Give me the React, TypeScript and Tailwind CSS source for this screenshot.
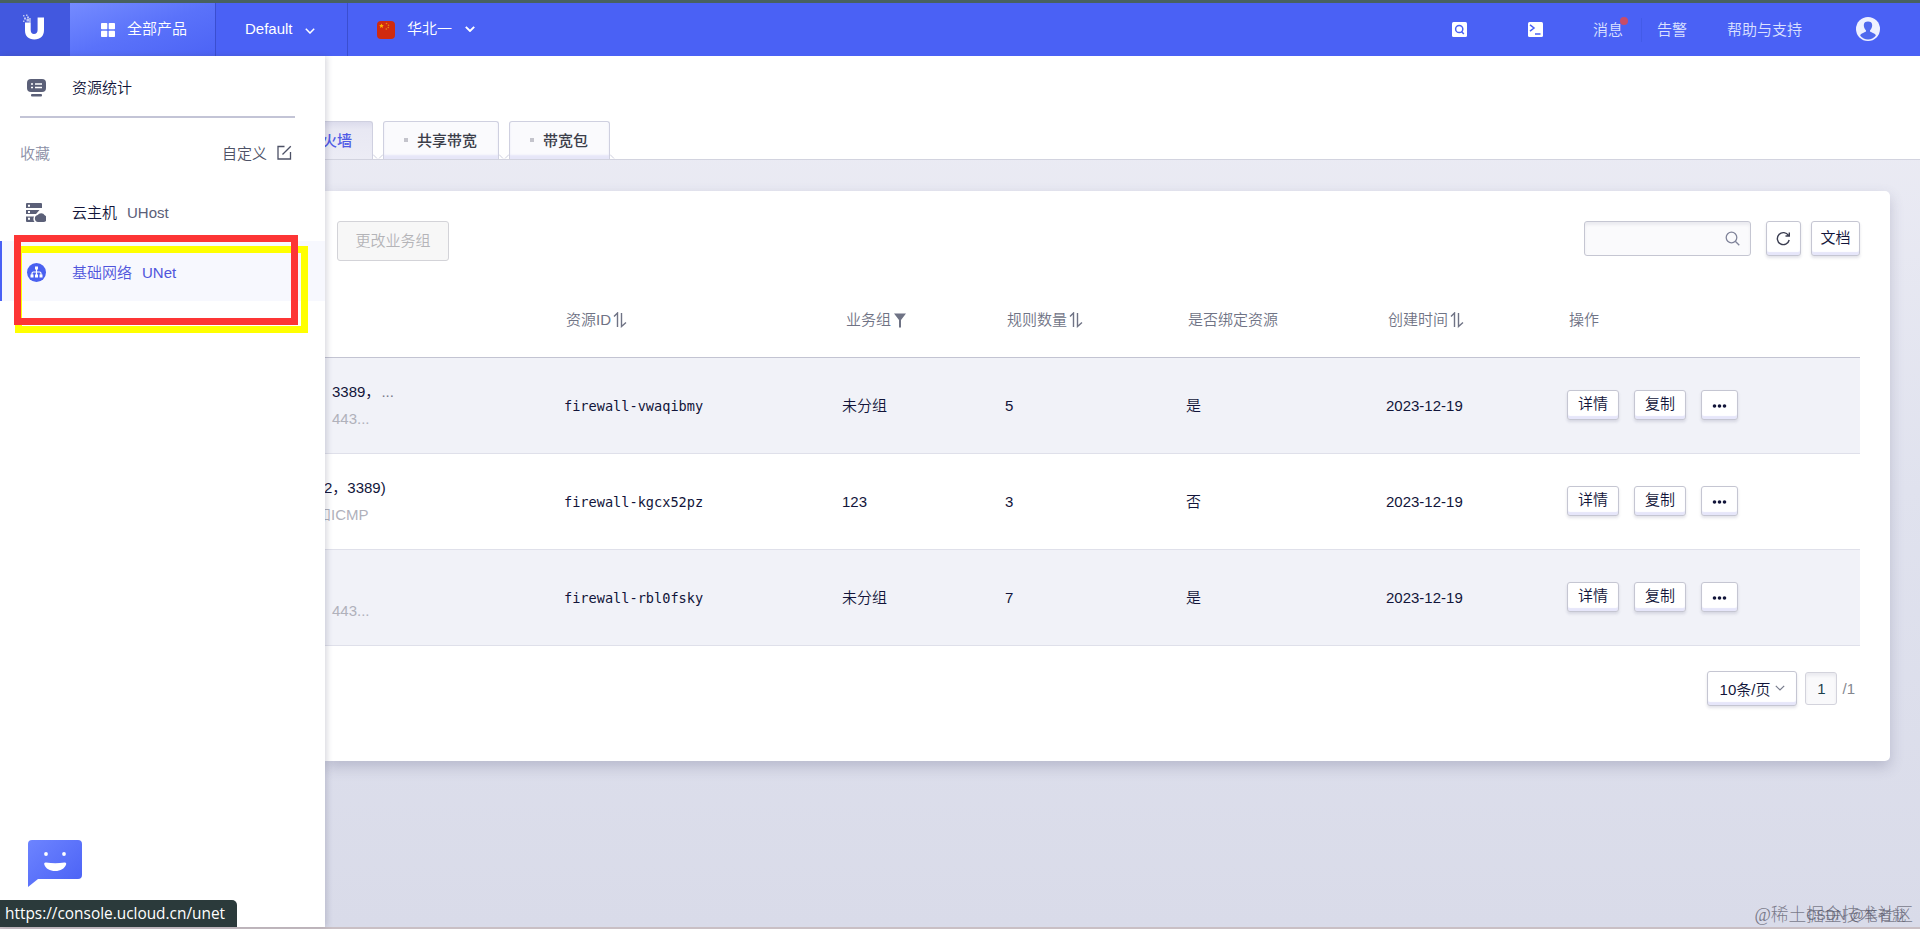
import React, { ReactNode } from "react";

const buttonClassName =
  "flex shrink-0 items-center justify-center rounded-[3px] border border-[#c5c6d2] bg-white text-[#12153a] shadow-[inset_0_-3px_1px_#e6e6fa,0_2px_3px_rgba(60,60,100,0.14)]";

interface FirewallRow {
  name: ReactNode;
  detail: string;
  id: string;
  group: string;
  rules: number;
  bound: string;
  created: string;
  detailClassName?: string;
  nameClassName?: string;
}

const rows: FirewallRow[] = [
  {
    name: (
      <>
        3389，<span className="ml-px text-[#777b8c]">...</span>
      </>
    ),
    detail: "443...",
    id: "firewall-vwaqibmy",
    group: "未分组",
    rules: 5,
    bound: "是",
    created: "2023-12-19",
  },
  {
    name: "2，3389)",
    nameClassName: "-ml-2",
    detail: "和ICMP",
    detailClassName: "-ml-4",
    id: "firewall-kgcx52pz",
    group: "123",
    rules: 3,
    bound: "否",
    created: "2023-12-19",
  },
  {
    name: "",
    detail: "443...",
    id: "firewall-rbl0fsky",
    group: "未分组",
    rules: 7,
    bound: "是",
    created: "2023-12-19",
  },
];

const gridClassName =
  "grid grid-cols-[239px_278px_162px_182px_199px_182px_1fr]";

const Logo: React.FC = () => (
  <svg className="mr-0.5 h-7 w-6" viewBox="0 0 24 28">
    <path
      d="M3 9.500h5.700V17c0 2.600 1.200 4 3.300 4s3.600-1.400 3.600-4V4.500H22V17c0 6-3.600 9.500-9.600 9.500C6.300 26.500 3 23 3 17.500z"
      fill="#fff"
    />
    <g fill="#fff" opacity=".65">
      <rect x="1" y="2" width="1.500" height="1.500" />
      <rect x="4" y="1.500" width="1.500" height="1.500" />
      <rect x="2" y="4.500" width="2" height="2" />
      <rect x="5" y="3.500" width="2" height="2" />
      <rect x="4.500" y="6" width="2.500" height="2.500" />
      <rect x="7.200" y="5" width="1.500" height="4.500" />
      <rect x="1" y="7.500" width="1.500" height="1.500" />
    </g>
  </svg>
);

const Chevron: React.FC<{ className?: string; width?: number }> = ({
  className = "",
  width = 1.5,
}) => (
  <svg className={className} viewBox="0 0 10 6" fill="none">
    <path d="M.8.8 5 5 9.200.8" stroke="currentColor" strokeWidth={width} />
  </svg>
);

const SortIcon: React.FC = () => (
  <svg className="ml-0.5 h-4 w-3.5" viewBox="0 0 14 16" fill="none">
    <path
      d="M1 4.500 4.500 1v14M8.500 1v13.500L13 10.500"
      stroke="currentColor"
      strokeWidth="1.400"
    />
  </svg>
);

const TopBar: React.FC = () => (
  <header className="flex h-14 shrink-0 border-t-[3px] border-[#48615f] bg-[#4a61f5] text-white">
    <div className="flex w-[70px] justify-center bg-[#4258df] pt-2.5">
      <Logo />
    </div>
    <div className="flex w-[146px] items-center border-r border-[#3a4ed0] bg-gradient-to-br from-[#758bff] via-[#5a72fa] to-[#4c63f5] pb-0.5 pl-[31px]">
      <svg
        className="mt-0.5 mr-3 h-3.5 w-3.5"
        viewBox="0 0 14 14"
        fill="currentColor"
      >
        <rect width="6.300" height="6.300" rx=".8" />
        <rect x="7.700" width="6.300" height="6.300" rx=".8" />
        <rect y="7.700" width="6.300" height="6.300" rx=".8" />
        <rect x="7.700" y="7.700" width="6.300" height="6.300" rx=".8" />
      </svg>
      全部产品
    </div>
    <div className="flex w-[132px] items-center border-r border-[#3a4ed0] pb-0.5 pl-[29px]">
      Default
      <Chevron className="mt-1 ml-3 h-1.5 w-2.5" />
    </div>
    <div className="flex items-center pb-0.5 pl-[29px]">
      <svg className="mt-0.5 mr-3 h-[18px] w-[18px]" viewBox="0 0 18 18">
        <rect width="18" height="18" rx="4" fill="#d02a10" />
        <path
          d="m4.500 2.500.7 1.500 1.600.2-1.200 1.100.3 1.600-1.400-.8-1.400.8.3-1.600L2.200 4.200l1.600-.2z"
          fill="#ffb400"
        />
        <g fill="#e88a10">
          <circle cx="9.500" cy="2.500" r=".8" />
          <circle cx="11.500" cy="4.200" r=".8" />
          <circle cx="11.300" cy="6.500" r=".8" />
          <circle cx="9.300" cy="8" r=".8" />
        </g>
      </svg>
      华北一
      <Chevron className="ml-[13px] h-1.5 w-2.5" width={1.9} />
    </div>
    <div className="ml-auto flex items-center pr-10 text-[#dce1ff]">
      <svg className="mr-[61px] h-[15px] w-[15px]" viewBox="0 0 15 15">
        <rect width="15" height="15" rx="1.500" fill="#fff" />
        <g fill="none" stroke="#4a61f5" strokeWidth="1.500">
          <circle cx="7.200" cy="7" r="3.600" />
          <path d="m9.500 9.500 2.300 2.500" />
        </g>
      </svg>
      <svg className="mr-[50px] h-[15px] w-[15px]" viewBox="0 0 15 15">
        <rect width="15" height="15" rx="1.500" fill="#fff" />
        <path
          d="m2 2.800 4 3.200-4 3.200M7 12h5.500"
          fill="none"
          stroke="#4a61f5"
          strokeWidth="1.500"
        />
      </svg>
      <span className="relative mr-[18px]">
        消息
        <i className="absolute -top-px -right-[5px] h-2 w-2 rounded-full bg-[#c94c69]" />
      </span>
      <span className="mr-[15px] h-6 w-px bg-[#435be8]" />
      <span className="mr-10">告警</span>
      <span className="mr-[54px]">帮助与支持</span>
      <svg className="-mt-0.5 h-6 w-6" viewBox="0 0 24 24">
        <circle cx="12" cy="12" r="12" fill="#eef0ff" />
        <path
          d="M7.800 8c0-2.500 1.700-3.500 4.200-3.500S16.200 5.500 16.200 8c0 2-.8 4.200-2.200 5.400v1.200l4.500 2.200c.8.4 1.200 1 1.300 1.900A10.500 10.500 0 0 1 12 22.400a10.500 10.500 0 0 1-7.800-3.700c.1-.9.500-1.500 1.300-1.900l4.500-2.200v-1.200C8.600 12.200 7.800 10 7.800 8z"
          fill="#5068ee"
        />
      </svg>
    </div>
  </header>
);

const Sidebar: React.FC = () => (
  <aside className="relative z-10 flex w-[325px] shrink-0 flex-col bg-white text-[#12153a] shadow-[2px_0_6px_rgba(60,60,90,0.2)]">
    <div className="ml-5 flex h-[62px] w-[275px] items-center border-b-2 border-[#c3c4d6] pt-[3px] pl-[7px]">
      <svg className="h-[18px] w-[19px]" viewBox="0 0 19 18">
        <rect width="19" height="13" rx="4" fill="#5b6078" />
        <rect x="4" y="15" width="11" height="2.500" rx="1" fill="#5b6078" />
        <path
          d="M4 5h2M8 5h7M4 8.500h2M8 8.500h7"
          stroke="#fff"
          strokeWidth="1.600"
        />
      </svg>
      <span className="ml-[26px]">资源统计</span>
    </div>
    <div className="ml-5 flex h-[70px] w-[272px] items-center justify-between pt-0.5 text-[#8b8fa6]">
      <span>收藏</span>
      <span className="flex items-center text-[#4d5166]">
        自定义
        <svg
          className="-mt-[3px] ml-2.5 h-[15px] w-[15px]"
          viewBox="0 0 15 15"
          fill="none"
          stroke="currentColor"
          strokeWidth="1.300"
        >
          <path d="M7.500 1.500H1v12.500h12.500V7" />
          <path d="m5.500 9.500 8.300-8.300" />
        </svg>
      </span>
    </div>
    <div className="mt-[-7px] flex h-[60px] items-center pt-[3px] pl-[26px]">
      <svg className="h-5 w-5" viewBox="0 0 20 20" fill="#5b6078">
        <path d="M1 0h14a1 1 0 0 1 1 1v4H0V1a1 1 0 0 1 1-1zM0 7h13.500l-3.500 4H0zM0 13.500h8c-1 2-.8 3.800.5 5.500H1a1 1 0 0 1-1-1z" />
        <path d="M12 19a3.500 3.500 0 0 1-.3-6.900 4 4 0 0 1 7 .2A3.500 3.500 0 0 1 17 19z" />
        <path d="M2 1.700h2v2H2zM2 8h2v2H2zM2 14.700h2v2H2z" fill="#fff" />
      </svg>
      <span className="ml-[26px]">云主机</span>
      <span className="ml-2.5 text-[#5b6078]">UHost</span>
    </div>
    <div className="relative flex h-[60px] items-center border-l-2 border-[#4a61f5] bg-[#f7f8fe] pt-[3px] pl-[25px] text-[#4f55dc]">
      <svg className="h-[19px] w-[19px]" viewBox="0 0 19 19">
        <circle cx="9.500" cy="9.500" r="9.500" fill="#4a61f0" />
        <path
          d="M9.500 5v8M5 13v-2.500c0-1 .5-1.500 1.500-1.500h6c1 0 1.500.5 1.500 1.500V13"
          fill="none"
          stroke="#fff"
          strokeWidth="1.200"
        />
        <path
          d="M8 3.500h3v3H8zM3.500 11.500h3v3h-3zM8 11.500h3v3H8zM12.500 11.500h3v3h-3z"
          fill="#fff"
        />
      </svg>
      <span className="ml-[26px]">基础网络</span>
      <span className="ml-2.5">UNet</span>
      {/* highlight frame with its offset shadow frame */}
      <i className="absolute top-[5px] left-[13px] h-[87px] w-[293px] border-[7px] border-[#ffff00]" />
      <i className="absolute -top-1.5 left-3 h-[90px] w-[284px] border-[7px] border-[#fd3535]" />
    </div>
    <svg className="mt-auto mb-9 ml-5 h-[61px] w-[70px]" viewBox="0 0 70 61">
      <defs>
        <linearGradient id="bubble" x1="0" y1="0" x2="1" y2="1">
          <stop offset="0" stopColor="#6d84ff" />
          <stop offset="1" stopColor="#4a61f5" />
        </linearGradient>
      </defs>
      <path
        d="M12 10h46a4 4 0 0 1 4 4v31a4 4 0 0 1-4 4H18l-10 8V14a4 4 0 0 1 4-4z"
        fill="url(#bubble)"
      />
      <circle cx="26" cy="24" r="1.900" fill="#fff" />
      <circle cx="44" cy="24" r="1.900" fill="#fff" />
      <path
        d="M26 32.500c6 1 12.500 1 18.500 0 1.400-.2 2 .8 1.600 2C44.500 38.800 40.500 41 35.200 41s-9.500-2.300-10.900-6.500c-.4-1.200.3-2.200 1.700-2z"
        fill="#fff"
      />
    </svg>
  </aside>
);

const TabGap: React.FC<{ last?: boolean }> = ({ last = false }) => (
  <svg
    className="h-[39px] w-2.5 shrink-0"
    viewBox="0 0 10 39"
    fill="none"
    stroke="#cdcede"
  >
    <path d="M0 34.500 4 38.500" />
    {!last && <path d="M10 34.500 6 38.500" />}
  </svg>
);

const Tab: React.FC<{ label: string; className: string }> = ({
  label,
  className,
}) => (
  <div
    className={`flex h-[38px] shrink-0 items-center rounded-t-[3px] border border-b-0 border-[#cfd0e0] bg-[#fafafd] pl-5 font-medium text-[#3c3e4a] shadow-[inset_0_-4px_2px_#e6e6f8] ${className}`}
  >
    <i className="mr-[9px] mb-0.5 h-1 w-1 bg-[#c4c4cc]" />
    {label}
  </div>
);

const Tabs: React.FC = () => (
  <div className="flex h-[104px] shrink-0 items-end border-b border-[#d2d3df] bg-white">
    <div className="flex h-[38px] w-12 shrink-0 items-center rounded-tr-[3px] border-t border-r border-[#cfd0e0] bg-gradient-to-b from-[#dcdcec] via-[#e8e8f3] via-20% to-[#ececf5] font-medium text-[#4f5ae6]">
      <span className="-ml-[3px]">火墙</span>
    </div>
    <TabGap />
    <Tab label="共享带宽" className="w-[116px]" />
    <TabGap />
    <Tab label="带宽包" className="w-[101px]" />
    <TabGap last />
  </div>
);

const TableHeader: React.FC = () => (
  <div
    className={`${gridClassName} h-[72px] items-center border-b border-[#c3c4d2] pb-[3px] text-[#6f7385]`}
  >
    <span />
    <span className="flex items-center pl-0.5">
      资源ID
      <SortIcon />
    </span>
    <span className="flex items-center pl-1">
      业务组
      <svg className="ml-[3px] h-4 w-3" viewBox="0 0 12 16" fill="currentColor">
        <path d="M0 1.500h12L7 8v7.500H5V8z" />
      </svg>
    </span>
    <span className="flex items-center pl-[3px]">
      规则数量
      <SortIcon />
    </span>
    <span className="pl-0.5">是否绑定资源</span>
    <span className="flex items-center pl-[3px]">
      创建时间
      <SortIcon />
    </span>
    <span className="pl-0.5">操作</span>
  </div>
);

const TableRow: React.FC<{ row: FirewallRow }> = ({ row }) => (
  <div
    className={`${gridClassName} h-24 items-center border-b border-[#dfe0ea] text-[#12153a] odd:bg-white even:bg-[#f1f2f8]`}
  >
    <div className="pb-0.5 pl-[7px] whitespace-nowrap">
      <p className={`h-[27px] leading-[27px] ${row.nameClassName ?? ""}`}>
        {row.name}
      </p>
      <p
        className={`h-[27px] leading-[27px] text-[#b0b1bb] ${row.detailClassName ?? ""}`}
      >
        {row.detail}
      </p>
    </div>
    <span className="font-['DejaVu_Sans_Mono',monospace] text-[13.6px]">
      {row.id}
    </span>
    <span>{row.group}</span>
    <span className="pl-px">{row.rules}</span>
    <span>{row.bound}</span>
    <span className="pl-px">{row.created}</span>
    <span className="flex gap-[15px] pb-0.5">
      <button type="button" className={`${buttonClassName} h-[30px] w-[52px] pb-px`}>
        详情
      </button>
      <button type="button" className={`${buttonClassName} h-[30px] w-[52px] pb-px`}>
        复制
      </button>
      <button type="button" className={`${buttonClassName} h-[30px] w-[37px]`}>
        <svg
          className="mt-0.5 h-1 w-[15px]"
          viewBox="0 0 15 4"
          fill="currentColor"
        >
          <circle cx="2.500" cy="2" r="1.800" />
          <circle cx="7.500" cy="2" r="1.800" />
          <circle cx="12.500" cy="2" r="1.800" />
        </svg>
      </button>
    </span>
  </div>
);

const Toolbar: React.FC = () => (
  <div className="flex items-start pl-3">
    <button
      type="button"
      className="h-10 w-28 rounded-[3px] border border-[#d3d3d8] bg-[#f7f7f7] text-[#b4b4b8]"
    >
      更改业务组
    </button>
    <div className="ml-auto flex h-[35px] w-[167px] items-center justify-end rounded-[3px] border border-[#c5c6d2] bg-[#fafafc] pr-2.5 text-[#80849a] shadow-[inset_0_3px_3px_#ebebf0]">
      <svg className="h-[15px] w-[15px]" viewBox="0 0 15 15" fill="none">
        <g stroke="currentColor" strokeWidth="1.300">
          <circle cx="6.500" cy="6.500" r="5.300" />
          <path d="m10.300 10.300 4 4" />
        </g>
      </svg>
    </div>
    <button type="button" className={`${buttonClassName} ml-[15px] h-[35px] w-[35px]`}>
      <svg className="h-[15px] w-[15px]" viewBox="0 0 15 15" fill="none">
        <path
          d="M12.500 4.500A6 6 0 1 0 13.200 9M13.300 1.500V5H9.500"
          stroke="#3a3d50"
          strokeWidth="1.400"
        />
      </svg>
    </button>
    <button type="button" className={`${buttonClassName} ml-2.5 h-[35px] w-[49px] pb-0.5`}>
      文档
    </button>
  </div>
);

const Pagination: React.FC = () => (
  <div className="mt-[25px] flex items-start justify-end pr-[5px]">
    <button type="button" className={`${buttonClassName} h-[35px] w-[90px] pt-0.5`}>
      10条/页
      <Chevron
        className="-mt-1 ml-[5px] h-1.5 w-2.5 text-[#777b8c]"
        width={1.2}
      />
    </button>
    <span className="mt-px ml-2 flex h-[33px] w-8 items-center justify-center rounded-[3px] border border-[#d3d3dc] bg-[#f9f9fb] text-[#1c3f4c] shadow-[inset_0_3px_3px_#ebebf0]">
      1
    </span>
    <span className="mt-1.5 ml-[5px] text-[#85878f]">/1</span>
  </div>
);

export default function App() {
  return (
    <div className="relative flex h-[929px] w-[1920px] flex-col overflow-hidden font-['Liberation_Sans','Noto_Sans_CJK_SC',sans-serif] text-[15px] leading-6 font-[350]">
      <TopBar />
      <div className="flex min-h-0 flex-1 border-b-2 border-[#c9bfc4]">
        <Sidebar />
        <main className="flex min-w-0 flex-1 flex-col bg-gradient-to-b from-[#ededf5] via-[#e0e2ee] to-[#d9dbe9]">
          <Tabs />
          <div className="mt-[31px] mr-[30px] h-[570px] rounded-r-[5px] bg-white pt-[30px] pr-[30px] shadow-[0_6px_14px_rgba(70,70,110,0.24)]">
            <Toolbar />
            <div className="mt-[25px]">
              <TableHeader />
              {rows.map((row) => (
                <TableRow key={row.id} row={row} />
              ))}
            </div>
            <Pagination />
          </div>
        </main>
      </div>
      <div className="absolute bottom-0.5 left-0 z-20 flex h-[27px] w-[237px] items-center rounded-tr-[5px] bg-[#2b3a3b] pl-[5px] font-['Open_Sans',sans-serif] text-[15.4px] font-normal text-white">
        https://console.ucloud.cn/unet
      </div>
      <div className="absolute right-3.5 bottom-0.5 text-[14px] whitespace-nowrap text-[#3c3c50]/60">
        CSDN @笔者就
      </div>
      <div className="absolute right-[7px] bottom-0.5 font-['Liberation_Serif','Noto_Sans_CJK_SC',sans-serif] text-[17.8px] font-light whitespace-nowrap text-[#50505f]/70">
        @稀土掘金技术社区
      </div>
    </div>
  );
}
